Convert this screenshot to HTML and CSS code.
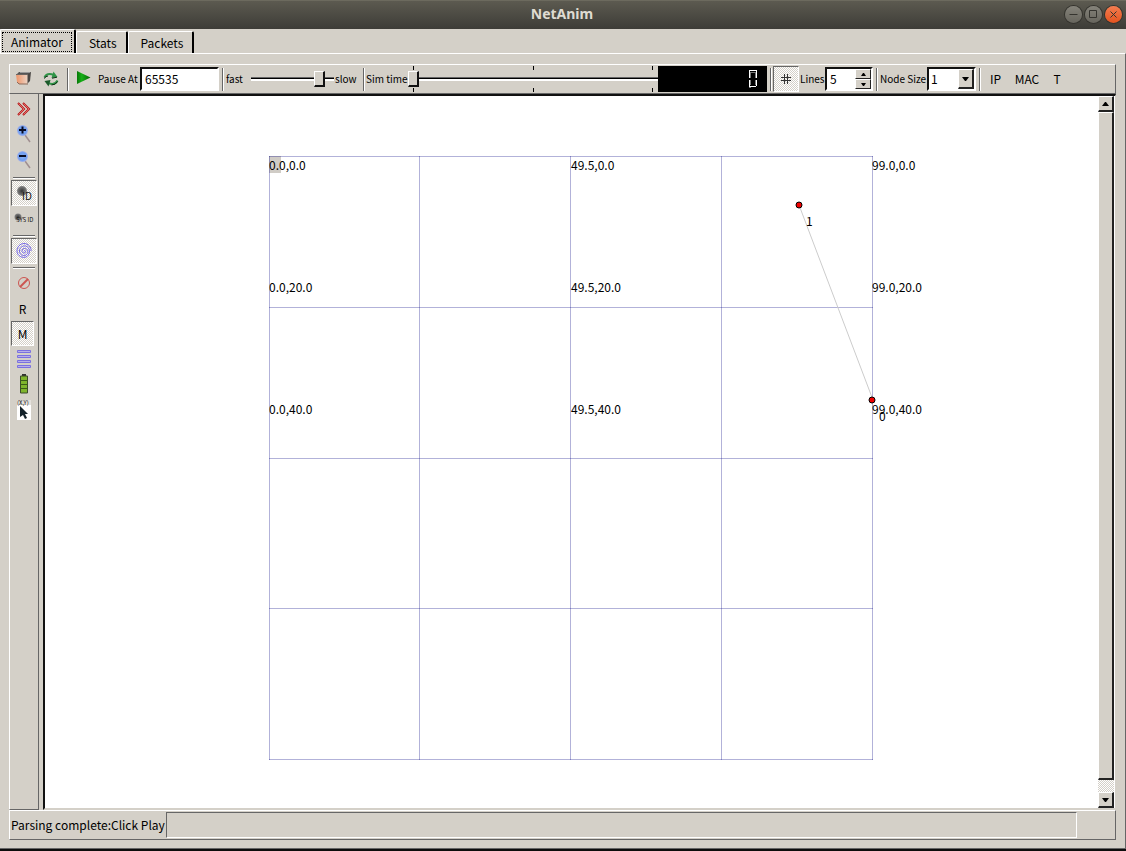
FILE: index.html
```
<!DOCTYPE html>
<html lang="en">
<head>
<meta charset="utf-8">
<title>NetAnim</title>
<link rel="stylesheet" href="styles.css">
</head>
<body>
<div class="window">
  <header class="titlebar">
    <h1 class="title">NetAnim</h1>
    <div class="window-controls">
      <button class="round" aria-label="Minimize"><svg width="17" height="17" viewBox="0 0 17 17"><path d="M4.500 8.500h8"/></svg></button>
      <button class="round" aria-label="Maximize"><svg width="17" height="17" viewBox="0 0 17 17"><path d="M4.500 4.500h7v7h-7z"/></svg></button>
      <button class="round close" aria-label="Close"><svg width="17" height="17" viewBox="0 0 17 17"><path d="M5.500 5.500l6 6M11.500 5.500l-6 6"/></svg></button>
    </div>
  </header>

  <nav class="tabs" role="tablist">
    <button class="tab active" role="tab" aria-selected="true"><span class="focus">Animator</span></button>
    <button class="tab" role="tab" aria-selected="false">Stats</button>
    <button class="tab" role="tab" aria-selected="false">Packets</button>
  </nav>

  <main class="pane">
    <div class="toolbar">
      <button class="tool" aria-label="Open file">
        <svg width="15" height="14" viewBox="0 0 15 14">
          <defs><linearGradient id="page" x1="0" x2="1"><stop offset="0" stop-color="#ee9468"/><stop offset="1" stop-color="#ecd2c2"/></linearGradient></defs>
          <path d="M0 3l3-3h12l-2 3z" fill="#555"/><path d="M4 .500h10" stroke="#999"/><path d="M15 0l-1 9-3 3V3z" fill="#4a4744"/><path d="M0 2h11.500v10H3L1 10z" fill="url(#page)"/><path d="M0 2.500h12" stroke="#6b6663"/><path d="M1 10l2 2h9" fill="none" stroke="#8b6a5a"/>
        </svg>
      </button>
      <button class="tool" aria-label="Reload">
        <svg width="16" height="16" viewBox="0 0 16 16" fill="none">
          <path d="M1.500 6.500C3 3 7 2.500 11 4" stroke="#2f9447" stroke-width="2"/><path d="M10.500 .500l4 5.500-6 1z" fill="#2f9447"/>
          <path d="M14.500 9.500C13 13 9 13.500 5 12" stroke="#2f9447" stroke-width="2"/><path d="M5.500 15.500l-4-5.500 6-1z" fill="#1b5a2a"/>
          <path d="M1 7.500q2-2.500 4-2.500M14.500 10.500q-2 3.500-6 3.500M9 7.200l5-1" stroke="#123018"/>
        </svg>
      </button>
      <i class="sep"></i>
      <button class="tool play" aria-label="Play">
        <svg width="14" height="14" viewBox="0 0 14 14">
          <defs><linearGradient id="go"><stop offset="0" stop-color="#087808"/><stop offset=".35" stop-color="#16b016"/><stop offset="1" stop-color="#066406"/></linearGradient></defs>
          <path d="M0 0L13.500 6.500L0 13z" fill="url(#go)"/>
        </svg>
      </button>
      <label class="caption pause" for="pause">Pause At</label>
      <input class="sunken pause-field" id="pause" type="text" value="65535">
      <i class="sep"></i>
      <label class="caption fast" for="rate">fast</label>
      <input class="slider rate" id="rate" type="range" min="0" max="100" value="87">
      <span class="caption slow">slow</span>
      <i class="sep"></i>
      <label class="caption sim" for="simtime">Sim time</label>
      <div class="timeline">
        <div class="ticks"><i></i><i></i><i></i></div>
        <input class="slider" id="simtime" type="range" min="0" max="100" value="0">
        <div class="ticks"><i></i><i></i><i></i></div>
      </div>
      <div class="lcd" role="img" aria-label="0">
        <svg width="8" height="18" viewBox="0 0 8 18" fill="none" shape-rendering="crispEdges">
          <path d="M0 .500h8M.500 0v8M7.500 1v7M.500 10v7M7.500 10v6M1 16.500h6" stroke="#fff"/>
          <path d="M1.500 2v6M6.500 2v6M2 2.500h4M1.500 10v5M6.500 10v5M0 17.500h2" stroke="#7a7a7a"/>
        </svg>
      </div>
      <i class="sep"></i>
      <button class="tool checked" aria-pressed="true" aria-label="Show grid">
        <svg width="12" height="12" viewBox="0 0 12 12" fill="none" stroke="#333"><path d="M4.500 1v10M7.500 1v10M1 4.500h10M1 7.500h10"/></svg>
      </button>
      <label class="caption lines" for="lines">Lines</label>
      <div class="sunken spin">
        <input id="lines" type="text" inputmode="numeric" value="5">
        <div class="steps">
          <button class="raised" aria-label="More lines"><svg width="5" height="3" viewBox="0 0 5 3"><path d="M2 0h1l2 3H0z"/></svg></button>
          <button class="raised" aria-label="Fewer lines"><svg width="5" height="3" viewBox="0 0 5 3"><path d="M0 0h5L3 3H2z"/></svg></button>
        </div>
      </div>
      <i class="sep"></i>
      <label class="caption size" for="size">Node Size</label>
      <div class="sunken combo">
        <select id="size"><option>1</option><option>2</option><option>5</option></select>
        <span class="raised combo-arrow"><svg width="7" height="4" viewBox="0 0 7 4"><path d="M0 0h7L4 4H3z"/></svg></span>
      </div>
      <i class="sep"></i>
      <button class="tool">IP</button>
      <button class="tool mac">MAC</button>
      <button class="tool t">T</button>
    </div>

    <div class="workspace">
      <aside class="sidebar">
        <button class="side" aria-label="More tools">
          <svg width="14" height="16" viewBox="0 0 14 16" fill="none"><path d="M1 2l6 6-6 6M6 2l6 6-6 6" stroke="#b51616" stroke-width="2"/><path d="M1.500 2.500L7 8l-5.500 5.500M6.500 2.500L12 8l-5.500 5.500" stroke="#f28c8c" stroke-width=".7"/></svg>
        </button>
        <button class="side" aria-label="Zoom in">
          <svg width="16" height="20" viewBox="0 0 16 20"><defs><radialGradient id="lens"><stop offset="0" stop-color="#8ab4f4"/><stop offset=".7" stop-color="#6e9df0"/><stop offset="1" stop-color="#a9b4e6"/></radialGradient></defs><path d="M9 10l5 7" stroke="#a08f90" stroke-width="1.500"/><circle cx="6.500" cy="5.500" r="5.500" fill="url(#lens)"/><path d="M3 5h7M6.500 1.500v7" stroke="#080c24" stroke-width="2"/></svg>
        </button>
        <button class="side" aria-label="Zoom out">
          <svg width="16" height="20" viewBox="0 0 16 20"><path d="M9 10l5 7" stroke="#a08f90" stroke-width="1.500"/><circle cx="6.500" cy="5.500" r="5.500" fill="url(#lens)"/><path d="M3 5h7" stroke="#080c24" stroke-width="2"/></svg>
        </button>
        <i class="rule"></i>
        <button class="side checked" aria-pressed="true" aria-label="Show node ID">
          <svg width="16" height="16" viewBox="0 0 16 16"><defs><radialGradient id="ball"><stop offset="0" stop-color="#333"/><stop offset="1" stop-color="#858585"/></radialGradient></defs><circle cx="6" cy="6" r="5" fill="url(#ball)"/><text class="badge" x="6" y="15">ID</text></svg>
        </button>
        <button class="side" aria-label="Show system ID">
          <svg width="20" height="12" viewBox="0 0 20 12"><circle cx="4" cy="4" r="3.500" fill="url(#ball)"/><text class="badge small" x="2" y="9">SYS ID</text></svg>
        </button>
        <i class="rule"></i>
        <button class="side checked" aria-pressed="true" aria-label="Show wireless circles">
          <svg width="16" height="16" viewBox="0 0 16 16" fill="none" stroke="#7466e8"><path d="M8 8c1-1 2 0 1.500 1C9 10.500 6.500 10.500 6 8.500C5.500 6 8 5 9.500 5.500c3 1 3 5 .5 6.500c-3 1.500-6.500-.5-6.500-4C3.500 4.500 6.500 2.500 9.500 3c5 1 5 8 1.500 10.500c-4 2.500-10-.5-10-5.500C1 4 4 .500 8 .500c4.500 0 7.500 4 7 7.500"/></svg>
        </button>
        <i class="rule"></i>
        <button class="side" aria-label="Block packets">
          <svg width="14" height="14" viewBox="0 0 14 14" fill="none" stroke="#cc5550"><circle cx="7" cy="7" r="5.500"/><path d="M3 11l8-8" stroke-width="2"/></svg>
        </button>
        <button class="side short letter">R</button>
        <button class="side checked letter short" aria-pressed="true">M</button>
        <button class="side short" aria-label="Packet table">
          <svg width="14" height="20" viewBox="0 0 14 20" fill="#b8b0e8" stroke="#7b70e0"><path d="M.500 1.500h13v2H.500zM.500 6.500h13v2H.500zM.500 11.500h13v2H.500zM.500 16.500h13v2H.500z"/></svg>
        </button>
        <button class="side" aria-label="Battery level">
          <svg width="10" height="20" viewBox="0 0 10 20"><path d="M3 0h4v2H3z" fill="#333"/><path d="M1.500 2h7v17h-7z" fill="#7fb52c" stroke="#3c4b2c"/><path d="M1 6.500h8M1 10.500h8M1 14.500h8" stroke="#3c5b18"/></svg>
        </button>
        <button class="side" aria-label="Mouse position">
          <svg width="14" height="20" viewBox="0 0 14 20"><path d="M0 0h14v20H0z" fill="#fff"/><path d="M0 0h14v5H0z" fill="#e4e1dc"/><text class="badge small" x="0" y="5">(X,Y)</text><path d="M3 6v11l3-2 2 4 2-1-2-4h3z" fill="#14222a"/></svg>
        </button>
      </aside>

      <section class="view">
        <div class="canvas">
          <svg class="scene" width="604" height="604" viewBox="0 0 604 604">
            <path class="selection" d="M0 0h12v17H0z"/>
            <path class="grid" d="M0 .500h604M0 151.500h604M0 302.500h604M0 452.500h604M0 603.500h604M.500 0v604M150.500 0v604M301.500 0v604M452.500 0v604M603.500 0v604"/>
            <path class="link" d="M530 49l74 195"/>
            <text x="0" y="14">0.0,0.0</text><text x="302" y="14">49.5,0.0</text><text x="603" y="14">99.0,0.0</text>
            <text x="0" y="136">0.0,20.0</text><text x="302" y="136">49.5,20.0</text><text x="603" y="136">99.0,20.0</text>
            <text x="0" y="258">0.0,40.0</text><text x="302" y="258">49.5,40.0</text><text x="603" y="258">99.0,40.0</text>
            <circle class="node" cx="530" cy="49" r="3"/><text x="537" y="70">1</text>
            <circle class="node" cx="603" cy="244" r="3"/><text x="610" y="265">0</text>
          </svg>
        </div>
        <div class="scrollbar">
          <button class="raised arrow" aria-label="Scroll up"><svg width="7" height="4" viewBox="0 0 7 4"><path d="M3 0h1l3 4H0z"/></svg></button>
          <div class="raised thumb"></div>
          <div class="track"></div>
          <button class="raised arrow" aria-label="Scroll down"><svg width="7" height="4" viewBox="0 0 7 4"><path d="M0 0h7L4 4H3z"/></svg></button>
        </div>
      </section>
    </div>

    <footer class="status">
      <span class="message">Parsing complete:Click Play</span>
      <div class="progress"></div>
    </footer>
  </main>
</div>
</body>
</html>
```
FILE: styles.css
```
* { box-sizing: border-box; }

body {
  margin: 0;
  background: #d4d0c8;
  color: #000;
  font: 12px/16px "Noto Sans CJK SC", "Noto Sans", sans-serif;
}

button, input, select { margin: 0; padding: 0; font: inherit; color: inherit; }
button { display: flex; align-items: center; justify-content: center; border: 0; background: none; }
svg { display: block; flex: none; overflow: visible; }

.window {
  display: flex;
  flex-direction: column;
  min-height: 100vh;
  border-bottom: 2px solid #0c0c0c;
}

.titlebar {
  display: grid;
  grid-template-columns: 1fr auto 1fr;
  align-items: center;
  height: 29px;
  padding: 0 4px 2px 2px;
  background: linear-gradient(#5c5a50, #3d3c37);
  border-top: 1px solid #6c6a5e;
}
.title { grid-column: 2; margin: 0; font: bold 14px/20px "Noto Sans", sans-serif; color: #dfdbd2; }
.window-controls { display: flex; justify-content: flex-end; gap: 3px; }
.round {
  width: 17px;
  height: 17px;
  border-radius: 50%;
  background: linear-gradient(#85837a, #67655d);
  box-shadow: 0 0 0 1px #34332e;
}
.round svg { fill: none; stroke: #35342f; }
.close { background: linear-gradient(#f47d50, #e4531f); }

.tabs { display: flex; align-items: flex-end; height: 24px; }
.tab {
  height: 22px;
  padding: 0 9px 0 12px;
  border-top: 1px solid #fff;
  border-left: 1px solid #fff;
  border-right: 2px solid #000;
  border-radius: 2px 2px 0 0;
}
.tab.active { height: 24px; padding: 0 2px 0 1px; }
.focus { padding: 1px 8px; border: 1px dotted #000; }

.pane {
  flex: 1;
  display: flex;
  flex-direction: column;
  padding: 10px 9px 8px;
  border: 1px solid #fff;
  border-left: 0;
  border-right-color: #666;
  border-bottom-color: #666;
}

.toolbar {
  display: flex;
  align-items: center;
  height: 30px;
  border: 1px solid #fff;
  border-right-color: #666;
  border-bottom-color: #666;
}
.tool { flex: none; width: 27px; height: 26px; }
.play { width: 28px; padding-bottom: 2px; }
.mac { width: 36px; }
.t { width: 24px; }
.sep {
  flex: none;
  width: 2px;
  height: 23px;
  margin: 0 1px 0 3px;
  border-left: 1px solid #666;
  border-right: 1px solid #fff;
}
.caption { flex: none; font-size: 10px; white-space: nowrap; }
.pause, .sim { width: 42px; }
.fast, .slow, .lines { width: 26px; padding-left: 1px; }
.size { width: 48px; padding-left: 1px; }
.sunken {
  flex: none;
  height: 24px;
  background: #fff;
  border: 2px solid #fff;
  border-top-color: #111;
  border-left-color: #111;
}
.raised {
  background: #d4d0c8;
  border: 1px solid #fff;
  border-right: 2px solid #222;
  border-bottom: 2px solid #222;
}
.pause-field { width: 79px; padding: 0 0 2px 3px; }

.slider {
  appearance: none;
  display: block;
  flex: none;
  height: 18px;
  background: linear-gradient(#666 0 1px, #000 1px 2px, #fff 2px 4px) center / 100% 4px no-repeat;
}
.slider::-webkit-slider-thumb {
  appearance: none;
  width: 11px;
  height: 16px;
  background: #d4d0c8;
  border: 1px solid #fff;
  border-right: 2px solid #111;
  border-bottom: 2px solid #111;
}
.rate { width: 83px; }
.timeline { flex: 0 1 250px; min-width: 60px; }
.timeline .slider { width: 100%; }
.ticks { display: flex; justify-content: space-between; padding: 0 5px; }
.ticks i { width: 1px; height: 4px; background: #000; }

.lcd {
  flex: none;
  display: flex;
  align-items: center;
  justify-content: flex-end;
  width: 109px;
  height: 26px;
  padding-right: 10px;
  background: #000;
}
.toolbar .checked { width: 26px; }
.checked, .track { background: repeating-conic-gradient(#d4d0c8 0 25%, #fff 0 50%) 0 0 / 2px 2px; }
.checked { border: 1px solid #fff; border-top-color: #666; border-left-color: #666; }

.spin { display: flex; width: 48px; }
.spin input { flex: 1; min-width: 0; padding-left: 3px; border: 0; background: none; }
.steps { display: grid; grid-template-rows: 1fr 1fr; width: 16px; }
.steps .raised { border-width: 1px; }
.combo { display: grid; grid-template-columns: 1fr 16px; width: 49px; }
.combo select {
  grid-area: 1 / 1 / 2 / 3;
  appearance: none;
  padding-left: 2px;
  border: 0;
  border-radius: 0;
  background: none;
}
.combo-arrow { grid-area: 1 / 2; display: grid; place-items: center; pointer-events: none; }

.workspace { flex: 1; display: flex; gap: 4px; }
.sidebar {
  width: 30px;
  padding: 2px 1px 0;
  border: 1px solid #fff;
  border-top: 0;
  border-right-color: #666;
  border-bottom-color: #666;
}
.side { width: 26px; height: 26px; }
.short { height: 25px; }
.letter { width: 23px; }
.rule {
  display: block;
  height: 2px;
  margin: 3px 2px 1px;
  border-top: 1px solid #666;
  border-bottom: 1px solid #fff;
}
.badge { font-size: 10px; fill: #111; }
.badge.small { font-size: 6px; }

.view {
  flex: 1;
  display: flex;
  background: #fff;
  border: 1px solid #d4d0c8;
  border-top: 2px solid #111;
  border-left: 2px solid #111;
  border-bottom-width: 2px;
}
.canvas { flex: 1; display: flex; justify-content: center; padding: 60px 2px 46px 0; }
.grid { fill: none; stroke: #000080; stroke-opacity: .3; }
.selection { fill: #d0ccc6; }
.link { stroke: #ccc; }
.node { fill: #f00000; stroke: #000; }

.scrollbar { display: flex; flex-direction: column; width: 17px; padding-right: 1px; }
.arrow { height: 16px; }
.thumb { flex: 1; }
.track { height: 12px; }

.status {
  display: flex;
  align-items: center;
  height: 30px;
  padding: 1px 38px 1px 1px;
  border: 1px solid #fff;
  border-right-color: #666;
  border-bottom-color: #666;
}
.message { width: 155px; white-space: nowrap; }
.progress {
  flex: 1;
  height: 26px;
  border: 1px solid #fff;
  border-top-color: #666;
  border-left-color: #666;
}
```
